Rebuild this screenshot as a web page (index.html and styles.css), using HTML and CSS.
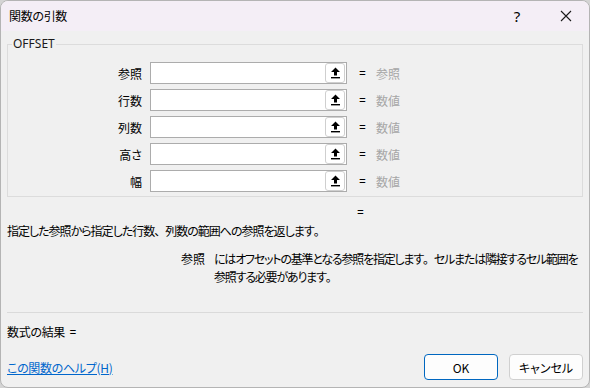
FILE: index.html
```html
<!DOCTYPE html>
<html lang="ja">
<head>
<meta charset="utf-8">
<title>関数の引数</title>
<link rel="stylesheet" href="styles.css">
</head>
<body>
<div class="window">
  <div class="titlebar">
    <span class="title">関数の引数</span>
    <span class="help">?</span>
    <span class="close">
      <svg width="12" height="12" viewBox="0 0 12 12"><path d="M1 1 L11 11 M11 1 L1 11" stroke="#1a1a1a" stroke-width="1.1" fill="none"/></svg>
    </span>
  </div>
  <div class="content">
    <fieldset class="group">
      <legend>OFFSET</legend>
      <div class="args">
        <div class="row">
          <span class="label">参照</span>
          <div class="field"><span class="ref"><svg width="11" height="12" viewBox="0 0 11 12"><path d="M5.5 0.5 L10 5 L7 5 L7 8.5 L4 8.5 L4 5 L1 5 Z" fill="#000"/><rect x="1" y="10" width="9" height="1.4" fill="#000"/></svg></span></div>
          <span class="eq">=</span>
          <span class="val">参照</span>
        </div>
        <div class="row">
          <span class="label">行数</span>
          <div class="field"><span class="ref"><svg width="11" height="12" viewBox="0 0 11 12"><path d="M5.5 0.5 L10 5 L7 5 L7 8.5 L4 8.5 L4 5 L1 5 Z" fill="#000"/><rect x="1" y="10" width="9" height="1.4" fill="#000"/></svg></span></div>
          <span class="eq">=</span>
          <span class="val">数値</span>
        </div>
        <div class="row">
          <span class="label">列数</span>
          <div class="field"><span class="ref"><svg width="11" height="12" viewBox="0 0 11 12"><path d="M5.5 0.5 L10 5 L7 5 L7 8.5 L4 8.5 L4 5 L1 5 Z" fill="#000"/><rect x="1" y="10" width="9" height="1.4" fill="#000"/></svg></span></div>
          <span class="eq">=</span>
          <span class="val">数値</span>
        </div>
        <div class="row">
          <span class="label">高さ</span>
          <div class="field"><span class="ref"><svg width="11" height="12" viewBox="0 0 11 12"><path d="M5.5 0.5 L10 5 L7 5 L7 8.5 L4 8.5 L4 5 L1 5 Z" fill="#000"/><rect x="1" y="10" width="9" height="1.4" fill="#000"/></svg></span></div>
          <span class="eq">=</span>
          <span class="val">数値</span>
        </div>
        <div class="row">
          <span class="label">幅</span>
          <div class="field"><span class="ref"><svg width="11" height="12" viewBox="0 0 11 12"><path d="M5.5 0.5 L10 5 L7 5 L7 8.5 L4 8.5 L4 5 L1 5 Z" fill="#000"/><rect x="1" y="10" width="9" height="1.4" fill="#000"/></svg></span></div>
          <span class="eq">=</span>
          <span class="val">数値</span>
        </div>
      </div>
    </fieldset>
    <div class="result-eq">=</div>
    <p class="desc">指定した参照から指定した行数<span class="fw">、</span>列数の範囲への参照を返します<span class="fw">。</span></p>
    <div class="argdesc">
      <span class="argname">参照</span>
      <span class="argtext">にはオフセットの基準となる参照を指定します<span class="fw">。</span>セルまたは隣接するセル範囲を参照する必要があります<span class="fw">。</span></span>
    </div>
    <div class="sep"></div>
    <div class="formula">数式の結果 <span class="feq">=</span></div>
    <div class="footer">
      <a class="helplink" href="#">この関数のヘルプ(H)</a>
      <div class="buttons">
        <button class="btn primary">OK</button>
        <button class="btn">キャンセル</button>
      </div>
    </div>
  </div>
</div>
</body>
</html>
```

FILE: styles.css
```css
* { box-sizing: border-box; }
html, body {
  margin: 0;
  padding: 0;
  width: 590px;
  height: 388px;
  background: #d4d4d4;
  overflow: hidden;
}
body {
  font-family: "Noto Sans CJK JP", "Noto Sans", sans-serif;
  font-size: 12px;
  color: #000;
  font-feature-settings: "palt" 1;
}
.fw {
  font-feature-settings: normal;
}
.window {
  width: 590px;
  height: 388px;
  border: 1px solid #b4b4b4;
  border-radius: 8px;
  background: #f0f0f0;
  overflow: hidden;
  display: flex;
  flex-direction: column;
}
.titlebar {
  height: 30px;
  flex: none;
  background: #f4eef6;
  display: flex;
  align-items: center;
  padding-left: 8px;
}
.title {
  flex: 1;
  font-size: 12px;
  line-height: 16px;
  letter-spacing: -0.3px;
}
.help {
  width: 20px;
  text-align: center;
  font-family: "Noto Sans", sans-serif;
  font-size: 15px;
  margin-right: 33px;
}
.close {
  width: 12px;
  height: 12px;
  display: flex;
  margin-right: 17px;
}
.content {
  flex: 1;
  padding: 0 6px;
  display: flex;
  flex-direction: column;
}
.group {
  margin: 5px 0 0 0;
  padding: 10px 0 4px 0;
  border: 1px solid #dcdcdc;
  min-width: 0;
}
.group legend {
  font-family: "Noto Sans", sans-serif;
  font-size: 12px;
  line-height: 16px;
  padding: 0 1px;
  margin-left: 4px;
  color: #1a1a1a;
}
.args {
  display: flex;
  flex-direction: column;
  gap: 5px;
}
.row {
  display: flex;
  align-items: center;
  height: 22px;
}
.label {
  width: 134px;
  text-align: right;
  margin-right: 8px;
}
.field {
  width: 197px;
  height: 22px;
  background: #fff;
  border: 1px solid #acacac;
  display: flex;
  justify-content: flex-end;
  align-items: center;
  padding-right: 1px;
}
.ref {
  width: 20px;
  height: 20px;
  background: #fff;
  border: 1px solid #cfcfcf;
  border-radius: 3px;
  display: flex;
  align-items: center;
  justify-content: center;
}
.eq {
  margin-left: 12px;
  width: 17px;
  font-family: "Noto Sans", sans-serif;
}
.val {
  color: #a6a6a6;
}
.result-eq {
  margin: 8px 0 0 350px;
  line-height: 16px;
  font-family: "Noto Sans", sans-serif;
}
.desc {
  margin: 2px 0 0 0;
  line-height: 16px;
  letter-spacing: -1px;
}
.argdesc {
  margin-top: 11px;
  display: flex;
  line-height: 18px;
}
.argname {
  width: 198px;
  text-align: right;
  flex: none;
  margin-right: 9px;
}
.argtext {
  width: 369px;
  letter-spacing: -1.2px;
}
.sep {
  margin-top: 26px;
  height: 1px;
  background: #dadada;
}
.formula {
  margin-top: 11px;
  line-height: 16px;
  letter-spacing: -0.3px;
}
.feq {
  margin-left: 2px;
  font-family: "Noto Sans", sans-serif;
}
.footer {
  margin-top: 13px;
  display: flex;
  align-items: center;
  justify-content: space-between;
}
.helplink {
  color: #0066cc;
  text-decoration: underline;
  letter-spacing: -0.3px;
}
.buttons {
  display: flex;
  gap: 11px;
}
.btn {
  width: 74px;
  height: 26px;
  font-family: "Noto Sans CJK JP", sans-serif;
  font-size: 12px;
  font-feature-settings: "palt" 1;
  background: #fdfdfd;
  border: 1px solid #d0d0d0;
  border-radius: 4px;
  color: #000;
  padding: 0;
}
.btn.primary {
  border-color: #0067c0;
}
```
